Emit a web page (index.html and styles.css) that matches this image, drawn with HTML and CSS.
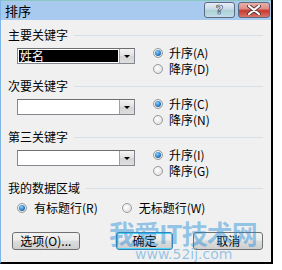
FILE: index.html
```html
<!DOCTYPE html>
<html lang="zh">
<head>
<meta charset="utf-8">
<link rel="stylesheet" href="styles.css">
</head>
<body>
<div class="window">
  <div class="titlebar">
    <span class="title">排序</span>
    <div class="tbtns">
      <span class="tbtn help">?</span>
      <span class="tbtn close">
        <svg width="14" height="10" viewBox="0 0 14 10"><path d="M2 1 L12 9 M12 1 L2 9" stroke="#5a3a3a" stroke-width="4" stroke-linecap="round"/><path d="M2 1 L12 9 M12 1 L2 9" stroke="#fff" stroke-width="2.2" stroke-linecap="round"/></svg>
      </span>
    </div>
  </div>
  <div class="body">
    <div class="header first"><span>主要关键字</span><i class="rule"></i></div>
    <div class="row">
      <div class="combo"><div class="field selected"><span>姓名</span></div><div class="drop"><i></i></div></div>
      <div class="radios">
        <label class="radio"><span class="dot on"></span>升序(A)</label>
        <label class="radio"><span class="dot"></span>降序(D)</label>
      </div>
    </div>
    <div class="header"><span>次要关键字</span><i class="rule"></i></div>
    <div class="row">
      <div class="combo"><div class="field"></div><div class="drop"><i></i></div></div>
      <div class="radios">
        <label class="radio"><span class="dot on"></span>升序(C)</label>
        <label class="radio"><span class="dot"></span>降序(N)</label>
      </div>
    </div>
    <div class="header"><span>第三关键字</span><i class="rule"></i></div>
    <div class="row">
      <div class="combo"><div class="field"></div><div class="drop"><i></i></div></div>
      <div class="radios">
        <label class="radio"><span class="dot on"></span>升序(I)</label>
        <label class="radio"><span class="dot"></span>降序(G)</label>
      </div>
    </div>
    <div class="header"><span>我的数据区域</span><i class="rule"></i></div>
    <div class="range">
      <label class="radio"><span class="dot on"></span>有标题行(R)</label>
      <label class="radio second"><span class="dot"></span>无标题行(W)</label>
    </div>
    <div class="buttons">
      <button class="btn opt">选项(O)...</button>
      <button class="btn ok">确定</button>
      <button class="btn cancel">取消</button>
    </div>
    <div class="watermark"><div class="wm1">我爱IT技术网</div><div class="wm2">www.52ij.com</div></div>
  </div>
</div>
</body>
</html>
```
FILE: styles.css
```css
html, body {
  margin: 0;
  padding: 0;
  background: #ffffff;
}
body {
  width: 282px;
  height: 270px;
  overflow: hidden;
  font-family: "Noto Sans CJK SC", "Noto Sans", sans-serif;
  font-size: 12px;
  line-height: 12px;
  color: #000;
}
.window {
  width: 273px;
  height: 264px;
  box-sizing: border-box;
  border-left: 1px solid #7fb6e6;
  border-right: 2px solid #000;
  border-bottom: 2px solid #000;
  background: #f0f0f0;
  display: flex;
  flex-direction: column;
}
.titlebar {
  height: 20px;
  box-sizing: border-box;
  border-top: 1px solid #8cc6c2;
  background: #a8caef;
  display: flex;
  align-items: center;
  padding-left: 4px;
}
.title {
  font-size: 13px;
  line-height: 13px;
}
.tbtns {
  margin-left: auto;
  margin-right: 1px;
  display: flex;
  gap: 3px;
  margin-top: -1px;
}
.tbtn {
  width: 29px;
  height: 14px;
  border: 1px solid #5b6a7e;
  border-radius: 3px;
  display: flex;
  align-items: center;
  justify-content: center;
}
.help {
  background: linear-gradient(#e6eef6 0%, #c9d8e8 45%, #a9d3d0 55%, #c6dcee 100%);
  color: #fff;
  font-family: "DejaVu Sans", sans-serif;
  font-weight: bold;
  font-size: 13px;
  -webkit-text-stroke: 0.7px #4a4a4a;
}
.close {
  width: 30px;
  background: linear-gradient(#eab0aa 0%, #dd8f88 40%, #c8392f 55%, #d8746a 100%);
}
.body {
  flex: 1;
  position: relative;
  padding: 0 8px 0 7px;
}
.header {
  height: 12px;
  display: flex;
  align-items: center;
  gap: 6px;
  margin-top: 3px;
}
.header.first {
  margin-top: 9px;
}
.rule {
  flex: 1;
  height: 0;
  border-top: 1px solid #d5dfe5;
  margin-top: 1px;
}
.row {
  display: flex;
  margin-top: 4px;
  height: 32px;
}
.combo {
  margin-left: 9px;
  margin-top: 3px;
  width: 118px;
  height: 16px;
  box-sizing: border-box;
  border: 1px solid #828790;
  border-top-color: #6e6e6e;
  background: #fff;
  display: flex;
}
.field {
  flex: 1;
  display: flex;
  align-items: center;
}
.field.selected {
  margin: 1px;
  background: #000;
  color: #fff;
  padding-left: 1px;
}
.drop {
  width: 15px;
  box-sizing: border-box;
  border-left: 1px solid #a0a0a0;
  background: linear-gradient(#f4f4f4, #e0e0e0 50%, #d4d4d4 51%, #dedede);
  display: flex;
  align-items: center;
  justify-content: center;
}
.drop i {
  width: 0;
  height: 0;
  border-left: 3px solid transparent;
  border-right: 3px solid transparent;
  border-top: 3px solid #000;
  margin-top: 1px;
}
.radios {
  margin-left: 18px;
  display: flex;
  flex-direction: column;
}
.radio {
  height: 16px;
  display: flex;
  align-items: center;
  white-space: nowrap;
}
.dot {
  width: 10px;
  height: 10px;
  box-sizing: border-box;
  border-radius: 50%;
  border: 1px solid #9a9a9a;
  background: radial-gradient(circle at 40% 40%, #ffffff, #d8d8d8);
  margin-right: 6px;
  position: relative;
}
.dot.on::after {
  content: "";
  position: absolute;
  left: 1px;
  top: 1px;
  width: 6px;
  height: 6px;
  border-radius: 50%;
  background: radial-gradient(circle at 40% 35%, #8fd0ff 0%, #2a7fc8 55%, #0d3e78 100%);
}
.range {
  display: flex;
  margin-top: 6px;
  padding-left: 9px;
}
.range .second {
  margin-left: 24px;
}
.range .dot {
  margin-right: 7px;
}
.buttons {
  display: flex;
  margin-top: 16px;
  padding-left: 4px;
}
.btn {
  height: 18px;
  box-sizing: border-box;
  border: 1px solid #707070;
  border-radius: 3px;
  background: linear-gradient(#f2f2f2 0%, #ebebeb 45%, #dddddd 50%, #cfcfcf 100%);
  font-family: "Noto Sans CJK SC", "Noto Sans", sans-serif;
  font-size: 12px;
  line-height: 12px;
  padding: 0;
  color: #000;
}
.opt {
  width: 68px;
}
.ok {
  width: 58px;
  margin-left: 36px;
  border-color: #3c7fb1;
  box-shadow: inset 0 0 0 1px #48d6fb;
}
.cancel {
  width: 70px;
  margin-left: 20px;
}
.watermark {
  position: absolute;
  left: 108px;
  top: 199px;
  color: rgba(30, 140, 215, 0.45);
  pointer-events: none;
}
.wm1 {
  font-size: 26px;
  line-height: 28px;
  font-weight: bold;
  letter-spacing: -1px;
}
.wm2 {
  font-size: 14px;
  line-height: 14px;
  margin-left: 26px;
  font-family: "DejaVu Sans", sans-serif;
}
```
